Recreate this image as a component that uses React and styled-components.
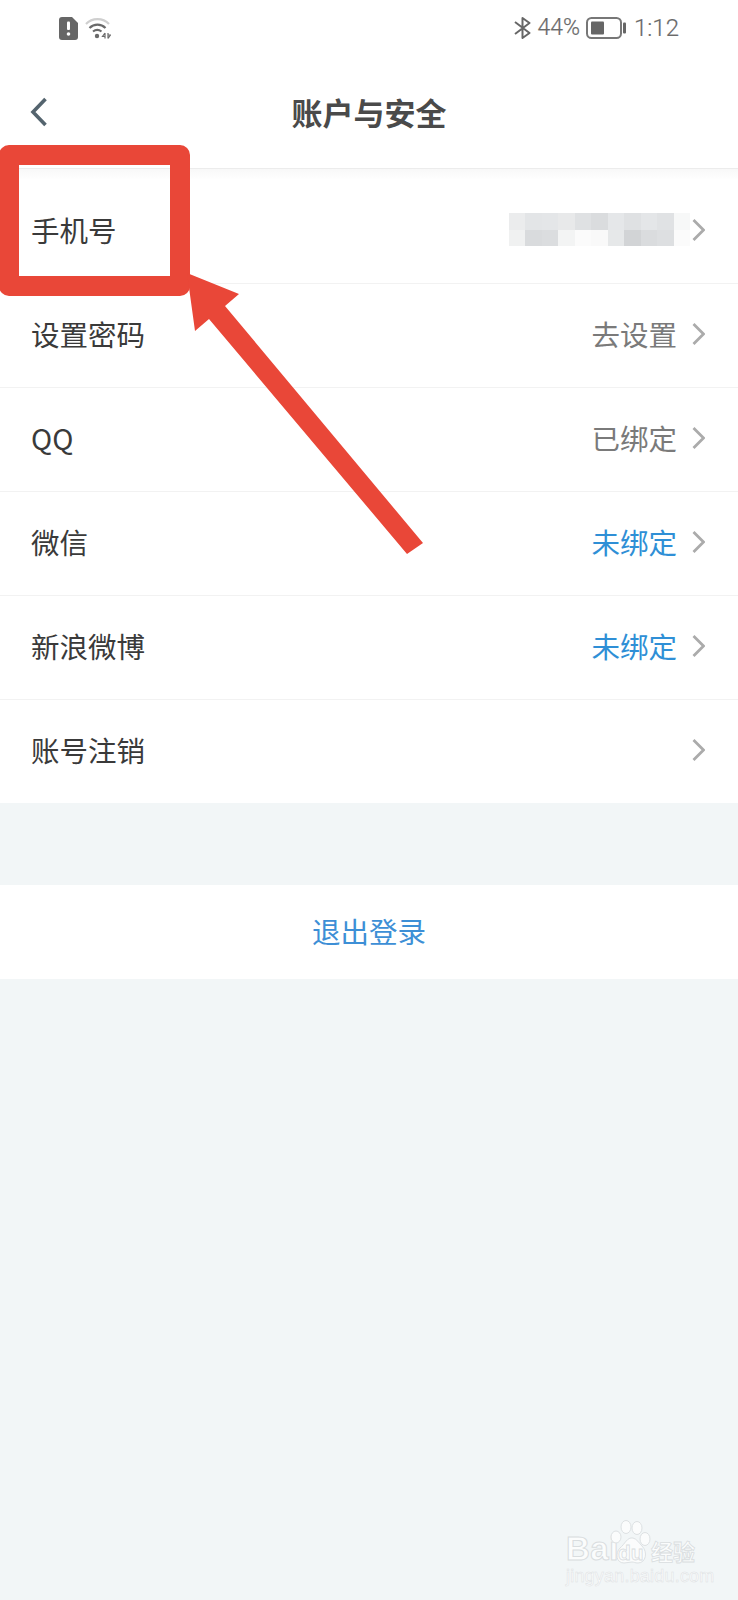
import React from "react";
import styled, { createGlobalStyle } from "styled-components";

const Global = createGlobalStyle`
  html, body { margin: 0; padding: 0; background: #f2f6f7; }
  * { box-sizing: border-box; }
`;

const Page = styled.div`
  position: relative;
  width: 738px;
  height: 1600px;
  overflow: hidden;
  background: #f2f6f7;
  font-family: "Noto Sans CJK SC", "Noto Sans", sans-serif;
  color: #3a3a3a;
`;
const StatusBar = styled.div`
  height: 56px;
  background: #fff;
  display: flex;
  align-items: center;
  justify-content: space-between;
  padding: 0 59px 0 59px;
`;
const StatusGroup = styled.div`
  display: flex;
  align-items: center;
  gap: ${(p) => p.$gap || 6}px;
  color: #6a6a6a;
`;
const StatusText = styled.span`
  font-family: "Roboto", sans-serif;
  font-weight: 300;
  font-size: ${(p) => p.$size}px;
  line-height: 24px;
  margin-left: ${(p) => p.$ml || 0}px;
  -webkit-text-stroke: 0.2px #6a6a6a;
`;
const Header = styled.header`
  height: 113px;
  background: #fff;
  display: grid;
  grid-template-columns: 1fr auto 1fr;
  align-items: center;
  padding: 0 30px;
  border-bottom: 1px solid #ececec;
`;
const Title = styled.h1`
  margin: 0;
  font-size: 31px;
  font-weight: 700;
  color: #4a4a4a;
  line-height: 40px;
`;
const HeaderShade = styled.div`
  height: 11px;
  background: linear-gradient(#f8f8f8, #fff);
`;
const List = styled.div`
  background: #fff;
`;
const Row = styled.div`
  height: 104px;
  display: flex;
  align-items: center;
  justify-content: space-between;
  padding: 0 33px 3px 31px;
  border-bottom: 1px solid #f2f2f2;
  &:last-child { height: 103px; border-bottom: 0; }
`;
const Label = styled.span`
  font-size: 28.5px;
  line-height: 40px;
  color: #3a3a3a;
`;
const RowEnd = styled.div`
  display: flex;
  align-items: center;
  gap: 15px;
`;
const Value = styled.span`
  font-size: 28.5px;
  line-height: 40px;
  color: ${(p) => (p.$link ? "#2f8fd6" : "#7a7a7a")};
`;
const Mosaic = styled.div`
  display: grid;
  grid-template-columns: repeat(11, 16.5px);
  grid-auto-rows: 16.5px;
  margin-right: -13px;
  margin-top: -1px;
`;
const MosaicCell = styled.div`
  background: ${(p) => p.$c};
`;
const Logout = styled.div`
  margin-top: 82px;
  height: 94px;
  background: #fff;
  display: flex;
  align-items: center;
  justify-content: center;
  padding-bottom: 4px;
  font-size: 28.5px;
  color: #3d8fd6;
`;
const Callout = styled.div`
  position: absolute;
  left: -1px;
  top: 145px;
  width: 191px;
  height: 151px;
  border: 20px solid #e94738;
  border-radius: 10px;
`;
const Arrow = styled.svg`
  position: absolute;
  left: 0;
  top: 0;
  pointer-events: none;
`;
const Watermark = styled.div`
  position: absolute;
  left: 564px;
  top: 1518px;
  width: 140px;
  height: 70px;
  color: #fbfcfc;
`;
const WmBai = styled.span`
  position: absolute;
  left: 2px;
  top: 12px;
  font-family: "Liberation Sans", sans-serif;
  font-weight: 700;
  font-size: 33px;
  line-height: 38px;
  letter-spacing: 0.5px;
  -webkit-text-stroke: 1px #d9dddf;
`;
const WmDu = styled.span`
  position: absolute;
  left: 54px;
  top: 22px;
  font-family: "Liberation Sans", sans-serif;
  font-weight: 700;
  font-size: 21px;
  line-height: 26px;
  color: #fbfcfc;
  -webkit-text-stroke: 0.8px #d9dddf;
`;
const WmCn = styled.span`
  position: absolute;
  left: 87px;
  top: 17px;
  font-size: 22px;
  line-height: 30px;
  font-weight: 700;
  white-space: nowrap;
  -webkit-text-stroke: 0.8px #d9dddf;
`;
const WmUrl = styled.span`
  position: absolute;
  left: 2px;
  top: 48px;
  font-family: "Liberation Sans", sans-serif;
  font-size: 18px;
  line-height: 20px;
  white-space: nowrap;
  letter-spacing: 0.2px;
  -webkit-text-stroke: 0.5px #dde1e3;
`;

const Chevron = () => (
  <svg width="13" height="24" viewBox="0 0 13 24" fill="none">
    <path d="M1.5 2 L11.5 12 L1.5 22" stroke="#ababab" strokeWidth="2.8" />
  </svg>
);

const BackIcon = () => (
  <svg width="18" height="30" viewBox="0 0 18 30" fill="none">
    <path d="M15.5 2 L3 15 L15.5 28" stroke="#54646e" strokeWidth="3.6" />
  </svg>
);

const AlertIcon = () => (
  <svg width="19" height="23" viewBox="0 0 19 23">
    <path d="M3 0 H13 L19 6 V20 a3 3 0 0 1 -3 3 H3 a3 3 0 0 1 -3 -3 V3 a3 3 0 0 1 3 -3 Z" fill="#666" />
    <rect x="8" y="4.5" width="3" height="8.5" rx="1" fill="#fff" />
    <circle cx="9.5" cy="17" r="1.8" fill="#fff" />
  </svg>
);

const WifiIcon = () => (
  <svg width="26" height="22" viewBox="0 0 26 22" fill="none">
    <path d="M1 7 C7 0.5 18 0.5 24 7" stroke="#cfcfcf" strokeWidth="2.2" />
    <path d="M4.5 11 C9 6.5 16 6.5 20.5 11" stroke="#6a6a6a" strokeWidth="2.2" />
    <path d="M8 14.5 C10.5 12.5 14 12.5 16.5 14.5" stroke="#6a6a6a" strokeWidth="2.2" />
    <circle cx="12" cy="19" r="2.2" fill="#6a6a6a" />
    <path d="M20 16 V21.5 M20 16 L17.5 19.5 H20" stroke="#6a6a6a" strokeWidth="1.2" />
    <path d="M23 16 V21.5 M23 21.5 L25.5 18 H23" stroke="#6a6a6a" strokeWidth="1.2" />
  </svg>
);

const BluetoothIcon = () => (
  <svg width="17" height="22" viewBox="0 0 17 22" fill="none">
    <path d="M1 5 L15.5 16 L8.5 21 V1 L15.5 6 L1 17" stroke="#666" strokeWidth="2" strokeLinejoin="round" />
  </svg>
);

const BatteryIcon = () => (
  <svg width="40" height="22" viewBox="0 0 40 22">
    <rect x="1" y="1" width="34" height="20" rx="4.5" fill="none" stroke="#777" strokeWidth="2" />
    <rect x="5" y="4.5" width="13" height="13" rx="1" fill="#666" />
    <rect x="37" y="5.5" width="3" height="11" rx="1" fill="#666" />
  </svg>
);

const Paw = () => (
  <svg style={{ position: "absolute", left: 40, top: 0 }} width="50" height="48" viewBox="0 0 50 48" fill="#fbfcfc" stroke="#dde1e3" strokeWidth="1">
    <ellipse cx="12" cy="19" rx="5" ry="6" />
    <ellipse cx="22" cy="9" rx="5" ry="6.5" />
    <ellipse cx="33" cy="10" rx="5" ry="6.5" />
    <ellipse cx="41" cy="21" rx="5" ry="6.5" />
    <path d="M29 20 C33 21 35 25 38 28 C44 34 42 45 34 45 C31 45 30 44 28 44 C25 44 23 45 20 45 C12 45 11 35 16 30 C21 26 23 19 29 20 Z" />
  </svg>
);

const mosaicColors = [
  "#ebeced", "#e3e5e7", "#e4e6e8", "#e8e9ea", "#dfe1e3", "#dadcde", "#e5e7e9", "#dfe1e3", "#e4e6e8", "#e0e2e4", "#f7f8f8",
  "#f0f1f1", "#d9dbdd", "#dbdddf", "#f3f4f4", "#fbfbfb", "#f9f9f9", "#e6e8e9", "#d2d4d6", "#dadcde", "#dddfe1", "#fbfbfb",
];

const rows = [
  { label: "设置密码", value: "去设置" },
  { label: "QQ", value: "已绑定" },
  { label: "微信", value: "未绑定", link: true },
  { label: "新浪微博", value: "未绑定", link: true },
  { label: "账号注销" },
];

export default function App() {
  return (
    <Page>
      <Global />
      <StatusBar>
        <StatusGroup $gap={7}>
          <AlertIcon />
          <WifiIcon />
        </StatusGroup>
        <StatusGroup $gap={6}>
          <BluetoothIcon />
          <StatusText $size={23}>44%</StatusText>
          <BatteryIcon />
          <StatusText $size={24} $ml={2}>1:12</StatusText>
        </StatusGroup>
      </StatusBar>
      <Header>
        <BackIcon />
        <Title>账户与安全</Title>
      </Header>
      <HeaderShade />
      <List>
        <Row>
          <Label>手机号</Label>
          <RowEnd>
            <Mosaic>
              {mosaicColors.map((c, i) => (
                <MosaicCell key={i} $c={c} />
              ))}
            </Mosaic>
            <Chevron />
          </RowEnd>
        </Row>
        {rows.map((r) => (
          <Row key={r.label}>
            <Label>{r.label}</Label>
            <RowEnd>
              {r.value && <Value $link={r.link}>{r.value}</Value>}
              <Chevron />
            </RowEnd>
          </Row>
        ))}
      </List>
      <Logout>退出登录</Logout>

      <Callout />
      <Arrow width="738" height="600" viewBox="0 0 738 600">
        <polygon points="187,273 239,294 225,306 423,543 407,554 209,319 195,331" fill="#e94738" />
      </Arrow>
      <Watermark>
        <WmBai>Bai</WmBai>
        <Paw />
        <WmDu>du</WmDu>
        <WmCn>经验</WmCn>
        <WmUrl>jingyan.baidu.com</WmUrl>
      </Watermark>
    </Page>
  );
}
